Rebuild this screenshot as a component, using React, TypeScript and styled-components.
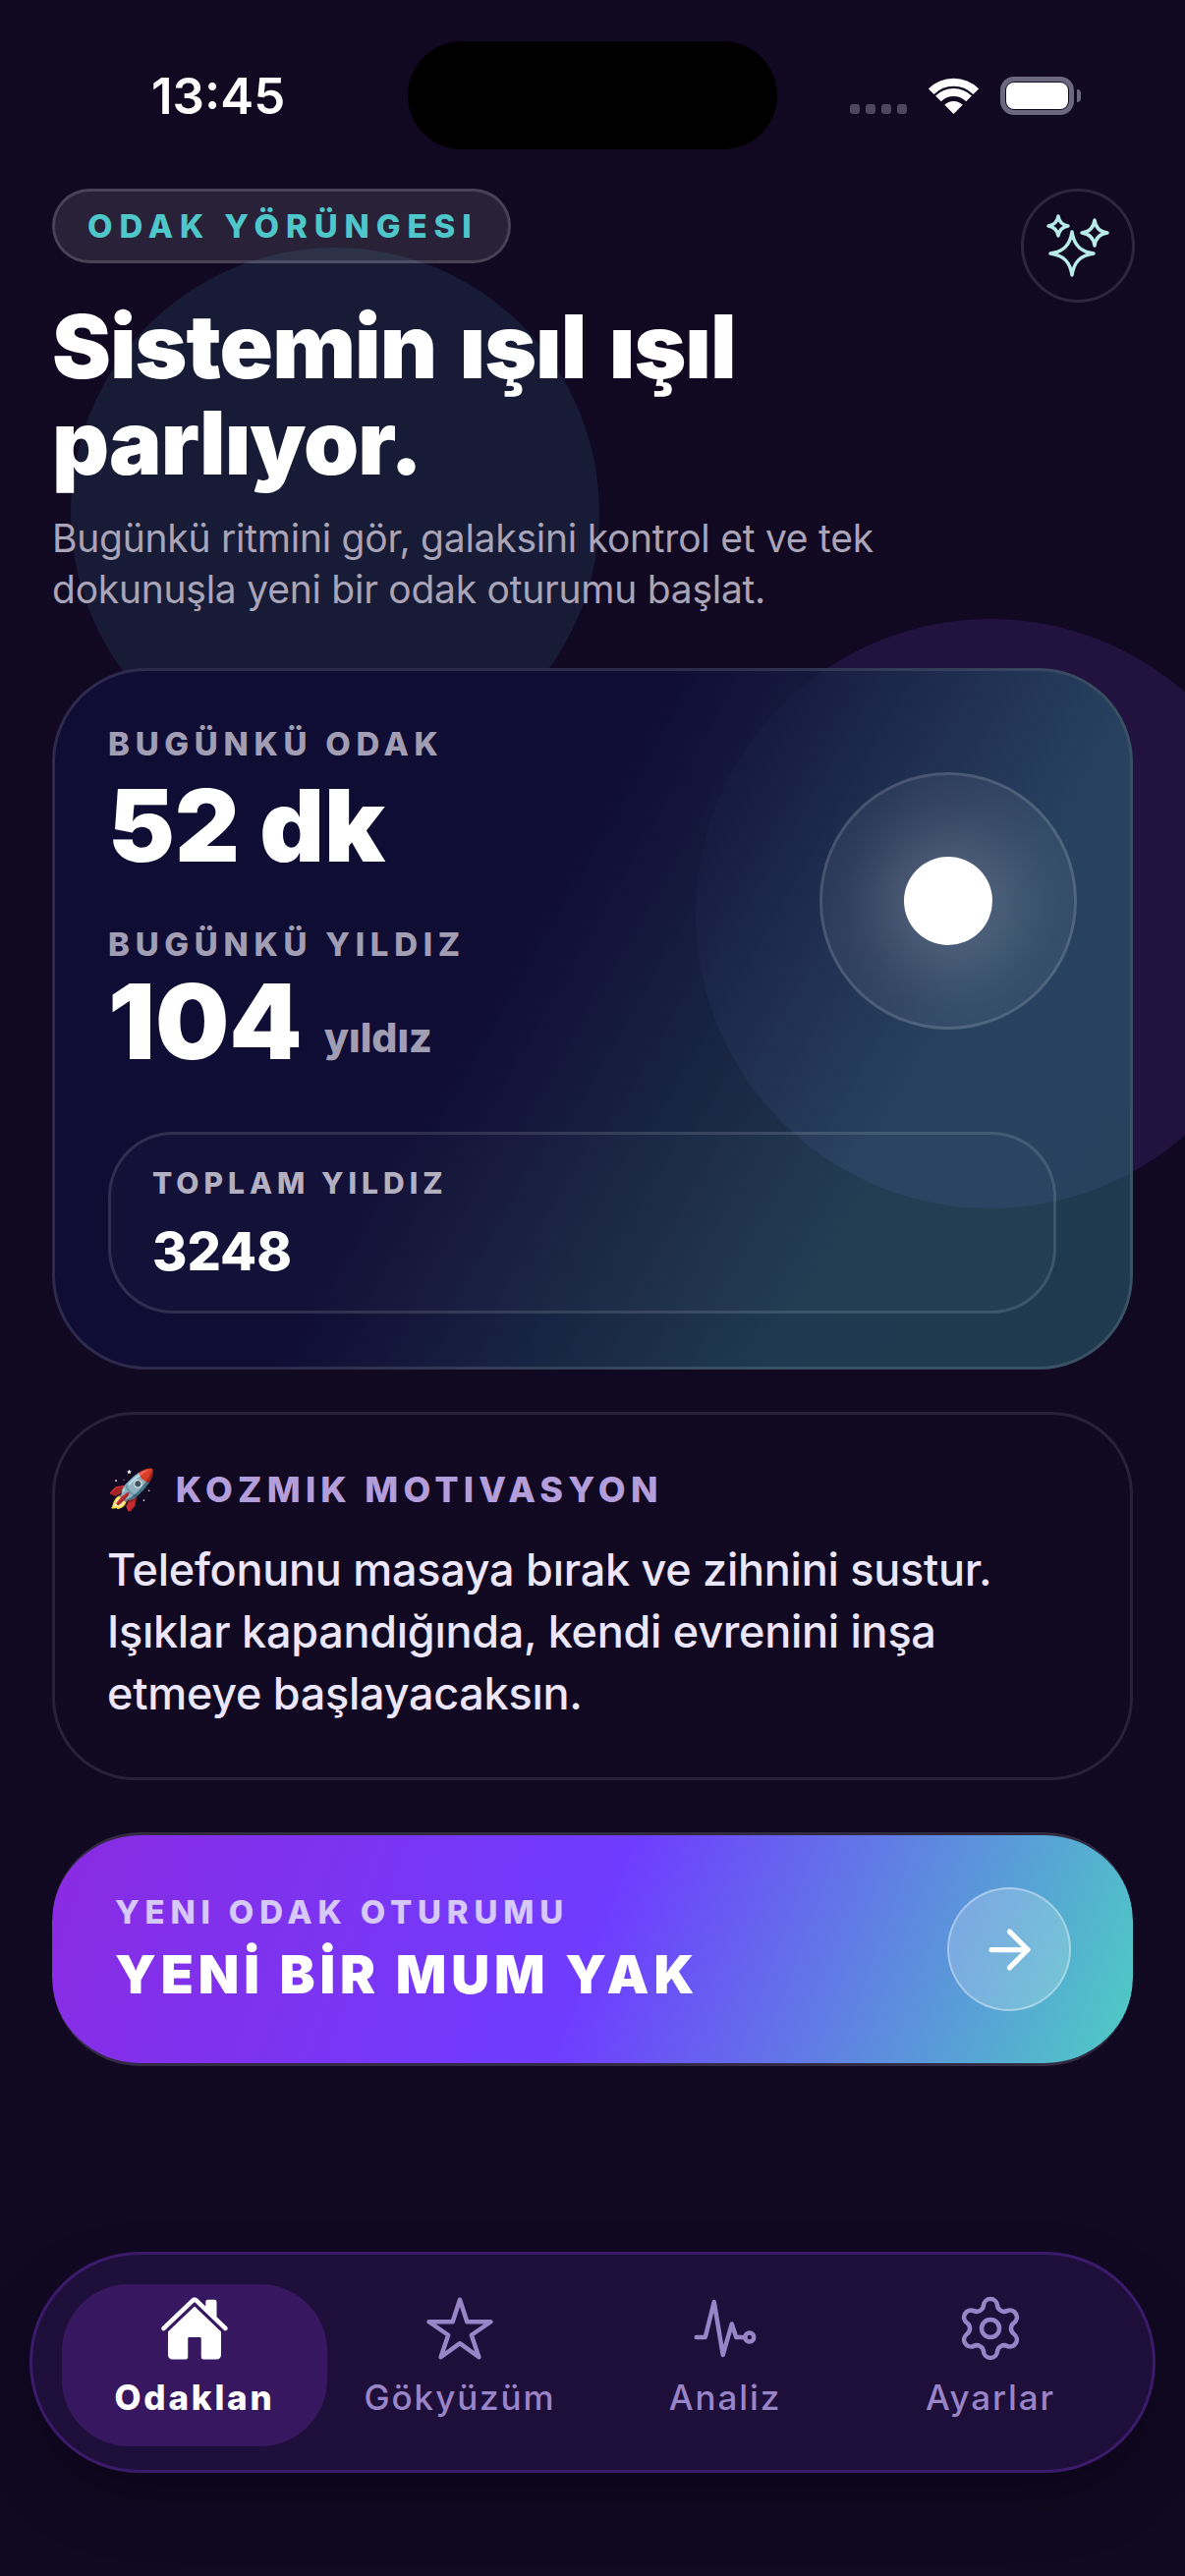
import React from "react";
import styled, { createGlobalStyle } from "styled-components";
import { ArrowRight, Settings } from "lucide-react";
import { IoHome, IoStarOutline, IoPulseOutline } from "react-icons/io5";

const GlobalStyle = createGlobalStyle`
  html, body {
    margin: 0;
    padding: 0;
    background: #110822;
  }
  * {
    box-sizing: border-box;
  }
`;

const Screen = styled.div`
  position: relative;
  width: 1206px;
  height: 2622px;
  overflow: hidden;
  display: flex;
  flex-direction: column;
  background: #110822;
  font-family: "Inter", "Liberation Sans", sans-serif;
  color: #ffffff;
`;

const NavyBlob = styled.div`
  position: absolute;
  left: 72px;
  top: 252px;
  width: 538px;
  height: 540px;
  border-radius: 50%;
  background: #171b35;
`;

const VioletBlob = styled.div`
  position: absolute;
  left: 708px;
  top: 630px;
  width: 600px;
  height: 600px;
  border-radius: 50%;
  background: #21123f;
`;

const Island = styled.div`
  position: absolute;
  left: 415px;
  top: 42px;
  width: 376px;
  height: 110px;
  border-radius: 55px;
  background: #000000;
`;

const StatusBar = styled.div`
  position: relative;
  height: 192px;
  flex-shrink: 0;
  padding: 78px 113px 0 154px;
  display: flex;
  justify-content: space-between;
  align-items: flex-start;
`;

const Clock = styled.div`
  margin-top: -5px;
  font-size: 51px;
  line-height: 50px;
  font-weight: 600;
`;

const StatusIcons = styled.div`
  display: flex;
  align-items: flex-end;
  height: 39px;
`;

const SignalDots = styled.div`
  display: flex;
  gap: 6px;
  margin-right: 22px;
  margin-bottom: 1px;
`;

const SignalDot = styled.span`
  width: 10px;
  height: 10px;
  border-radius: 3px;
  background: #4d4660;
`;

const WifiIcon = styled.svg`
  width: 51px;
  height: 37px;
  margin-right: 22px;
  margin-bottom: 1px;
`;

const Battery = styled.div`
  position: relative;
  width: 75px;
  height: 39px;
  padding: 1px;
  border: 5px solid #6a6880;
  border-radius: 14px;
`;

const BatteryFill = styled.div`
  width: 100%;
  height: 100%;
  border-radius: 8px;
  background: #ffffff;
`;

const BatteryNub = styled.div`
  position: absolute;
  right: -12px;
  top: 8px;
  width: 4px;
  height: 13px;
  border-radius: 0 4px 4px 0;
  background: #6a6880;
`;

const Content = styled.main`
  position: relative;
  padding: 0 53px;
  display: flex;
  flex-direction: column;
`;

const Header = styled.header`
  display: flex;
  justify-content: space-between;
  align-items: flex-start;
`;

const HeaderText = styled.div`
  width: 960px;
`;

const Pill = styled.div`
  display: inline-flex;
  align-items: center;
  height: 76px;
  padding: 0 31px 0 33px;
  border-radius: 38px;
  border: 3px solid rgba(255, 255, 255, 0.15);
  background: rgba(255, 255, 255, 0.1);
  color: #4ec6ca;
  font-size: 33px;
  font-weight: 800;
  letter-spacing: 6.9px;
`;

const SparkleButton = styled.div`
  width: 116px;
  height: 116px;
  margin-right: -2px;
  border-radius: 50%;
  border: 3px solid rgba(255, 255, 255, 0.12);
  display: flex;
  align-items: center;
  justify-content: center;
`;

const Title = styled.h1`
  margin: 36px 0 22px;
  font-size: 90px;
  line-height: 98px;
  font-weight: 900;
  letter-spacing: -1px;
  word-spacing: 6.5px;
`;

const Lead = styled.p`
  margin: 0;
  font-size: 39px;
  line-height: 52px;
  font-weight: 400;
  letter-spacing: -0.25px;
  color: #a9a4b8;
`;

const StatsCard = styled.section`
  position: relative;
  overflow: hidden;
  margin-top: 54px;
  padding: 54px;
  border-radius: 96px;
  border: 3px solid rgba(255, 255, 255, 0.12);
  background: linear-gradient(120deg, #100d35 42%, #1f3a50 75%, #1f3a4e 100%) border-box;
`;

const CardHalo = styled.div`
  position: absolute;
  left: 652px;
  top: -53px;
  width: 600px;
  height: 600px;
  border-radius: 50%;
  background: linear-gradient(120deg, rgba(70, 90, 150, 0.03) 12%, rgba(70, 90, 150, 0.22) 50%);
`;

const StatLabel = styled.div`
  position: relative;
  font-size: 33px;
  line-height: 40px;
  font-weight: 800;
  letter-spacing: 5.7px;
  color: #a19eb3;
`;

const StatValue = styled.div<{ $top: number; $size: number }>`
  position: relative;
  display: flex;
  align-items: flex-end;
  gap: 22px;
  margin-top: ${(p) => p.$top}px;
  font-size: ${(p) => p.$size}px;
  line-height: 110px;
  font-weight: 900;
`;

const StatUnit = styled.span`
  margin-bottom: 18px;
  font-size: 41px;
  line-height: 42px;
  font-weight: 800;
  color: #a19eb3;
`;

const StatGroup = styled.div`
  margin-bottom: 46px;
`;

const Orb = styled.div`
  position: absolute;
  right: 54px;
  top: 103px;
  width: 262px;
  height: 262px;
  border-radius: 50%;
  border: 3px solid rgba(255, 255, 255, 0.14);
  background: rgba(255, 255, 255, 0.06);
  display: flex;
  align-items: center;
  justify-content: center;
`;

const OrbCore = styled.div`
  width: 90px;
  height: 90px;
  border-radius: 50%;
  background: #ffffff;
  box-shadow: 0 0 80px 20px rgba(255, 255, 255, 0.22);
`;

const TotalBox = styled.div`
  position: relative;
  width: 965px;
  margin-top: 57px;
  padding: 31px 42px 30px;
  border-radius: 66px;
  border: 3px solid rgba(255, 255, 255, 0.12);
  background: rgba(255, 255, 255, 0.02);
`;

const TotalLabel = styled.div`
  font-size: 30px;
  line-height: 36px;
  font-weight: 800;
  letter-spacing: 5px;
  color: #b3b0c2;
`;

const TotalValue = styled.div`
  margin-top: 22px;
  font-size: 54px;
  line-height: 60px;
  font-weight: 800;
`;

const QuoteCard = styled.section`
  margin-top: 43px;
  padding: 54px 53px;
  border-radius: 84px;
  border: 3px solid rgba(255, 255, 255, 0.1);
  background: #110822;
`;

const QuoteHead = styled.div`
  display: flex;
  align-items: center;
  gap: 20px;
  height: 44px;
  font-size: 36px;
  font-weight: 800;
  letter-spacing: 5.2px;
  color: #b39ddb;
`;

const Rocket = styled.span`
  font-size: 40px;
  letter-spacing: 0;
  font-family: "Noto Color Emoji", "Apple Color Emoji", sans-serif;
`;

const QuoteText = styled.p`
  margin: 28px 0 0;
  font-size: 45px;
  line-height: 63px;
  font-weight: 500;
  letter-spacing: -0.28px;
  color: #ece6fb;
`;

const StartButton = styled.button`
  margin-top: 53px;
  height: 238px;
  padding: 0 63px 0 64px;
  border-radius: 90px;
  border: solid rgba(255, 255, 255, 0.14);
  border-width: 3px 0;
  background: linear-gradient(110deg, #8a2be2 0%, #6f3cff 50%, #4ecdc4 100%) padding-box;
  display: flex;
  align-items: center;
  justify-content: space-between;
  color: #ffffff;
  font-family: inherit;
  text-align: left;
`;

const StartKicker = styled.div`
  font-size: 33px;
  line-height: 40px;
  font-weight: 800;
  letter-spacing: 5.8px;
  color: #d6c8f8;
`;

const StartTitle = styled.div`
  margin-top: 12px;
  font-size: 54px;
  line-height: 64px;
  font-weight: 900;
  letter-spacing: 4.9px;
`;

const ArrowDisc = styled.div`
  width: 126px;
  height: 126px;
  border-radius: 50%;
  border: 2px solid rgba(255, 255, 255, 0.35);
  background: rgba(255, 255, 255, 0.2);
  display: flex;
  align-items: center;
  justify-content: center;
`;

const TabBar = styled.nav`
  position: relative;
  margin: auto 30px 105px 30px;
  height: 225px;
  padding: 30px;
  border-radius: 112px;
  border: 3px solid #3b1a6b;
  background: #1e0f3a;
  box-shadow: 0 30px 60px rgba(0, 0, 0, 0.25);
  display: flex;
`;

const TabItem = styled.div<{ $active?: boolean }>`
  flex: 1;
  height: 165px;
  padding-top: 9px;
  border-radius: 68px;
  display: flex;
  flex-direction: column;
  align-items: center;
  gap: 12px;
  background: ${(p) => (p.$active ? "#371860" : "transparent")};
  color: ${(p) => (p.$active ? "#ffffff" : "#9a84c8")};
`;

const TabLabel = styled.span<{ $active?: boolean }>`
  font-size: 35px;
  line-height: 44px;
  font-weight: ${(p) => (p.$active ? 800 : 500)};
  letter-spacing: ${(p) => (p.$active ? 2.8 : 1.9)}px;
`;

const Sparkles = () => (
  <svg width="70" height="70" viewBox="0 0 70 70" fill="none" stroke="#b8ecea" strokeWidth="3.5" strokeLinejoin="round">
    <path d="M29 21c2 13 8 20 22 22-14 2-20 9-22 22-2-13-8-20-22-22 14-2 20-9 22-22Z" />
    <path d="M15 5c1 6 4 9 10 10-6 1-9 4-10 10-1-6-4-9-10-10 6-1 9-4 10-10Z" />
    <path d="M52 9c1 8 5 12 13 13-8 1-12 5-13 13-1-8-5-12-13-13 8-1 12-5 13-13Z" />
  </svg>
);

const tabs = [
  { label: "Odaklan", icon: <IoHome size={72} />, active: true },
  { label: "Gökyüzüm", icon: <IoStarOutline size={72} /> },
  { label: "Analiz", icon: <IoPulseOutline size={72} /> },
  { label: "Ayarlar", icon: <Settings size={72} strokeWidth={1.5} /> },
];

const App: React.FunctionComponent = () => {
  return (
    <Screen>
      <GlobalStyle />
      <NavyBlob />
      <VioletBlob />

      <StatusBar>
        <Clock>13:45</Clock>
        <StatusIcons>
          <SignalDots>
            <SignalDot />
            <SignalDot />
            <SignalDot />
            <SignalDot />
          </SignalDots>
          <WifiIcon viewBox="0 0 51 37" fill="none" stroke="#ffffff" strokeWidth="8">
            <path d="M2.7 14.2a32 32 0 0 1 45.6 0" />
            <path d="M9.9 21.4a22 22 0 0 1 31.2 0" />
            <path d="M25.5 37l-9.2-9.2a13 13 0 0 1 18.4 0Z" fill="#ffffff" stroke="none" />
          </WifiIcon>
          <Battery>
            <BatteryFill />
            <BatteryNub />
          </Battery>
        </StatusIcons>
      </StatusBar>
      <Island />

      <Content>
        <Header>
          <HeaderText>
            <Pill>ODAK YÖRÜNGESI</Pill>
            <Title>Sistemin ışıl ışıl parlıyor.</Title>
            <Lead>Bugünkü ritmini gör, galaksini kontrol et ve tek dokunuşla yeni bir odak oturumu başlat.</Lead>
          </HeaderText>
          <SparkleButton>
            <Sparkles />
          </SparkleButton>
        </Header>

        <StatsCard>
          <CardHalo />
          <Orb>
            <OrbCore />
          </Orb>
          <StatGroup>
            <StatLabel>BUGÜNKÜ ODAK</StatLabel>
            <StatValue $top={8} $size={102}>52 dk</StatValue>
          </StatGroup>
          <StatLabel>BUGÜNKÜ YILDIZ</StatLabel>
          <StatValue $top={4} $size={106}>
            104
            <StatUnit>yıldız</StatUnit>
          </StatValue>
          <TotalBox>
            <TotalLabel>TOPLAM YILDIZ</TotalLabel>
            <TotalValue>3248</TotalValue>
          </TotalBox>
        </StatsCard>

        <QuoteCard>
          <QuoteHead>
            <Rocket>🚀</Rocket>
            KOZMIK MOTIVASYON
          </QuoteHead>
          <QuoteText>
            Telefonunu masaya bırak ve zihnini sustur. Işıklar kapandığında, kendi evrenini inşa etmeye başlayacaksın.
          </QuoteText>
        </QuoteCard>

        <StartButton>
          <div>
            <StartKicker>YENI ODAK OTURUMU</StartKicker>
            <StartTitle>YENİ BİR MUM YAK</StartTitle>
          </div>
          <ArrowDisc>
            <ArrowRight size={63} strokeWidth={2} />
          </ArrowDisc>
        </StartButton>
      </Content>

      <TabBar>
        {tabs.map((t) => (
          <TabItem key={t.label} $active={t.active}>
            {t.icon}
            <TabLabel $active={t.active}>{t.label}</TabLabel>
          </TabItem>
        ))}
      </TabBar>
    </Screen>
  );
};

export default App;
